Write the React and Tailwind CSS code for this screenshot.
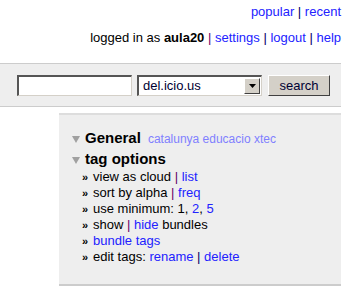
import React from "react";

const Sep = ({ purple }) => (
  <span className={purple ? "text-[#660066]" : "text-[#000066]"}> | </span>
);

const A = ({ children }) => <a className="text-[#2222ff] cursor-pointer">{children}</a>;

const Item = ({ children }) => (
  <li className="flex h-4 items-center">
    <span className="w-[11px] text-[11px] font-bold">»</span>
    <span>{children}</span>
  </li>
);

export default function App() {
  return (
    <div className="w-[349px] h-[293px] bg-white text-[13px] text-black font-['Liberation_Sans',Arial,sans-serif] overflow-hidden">
      {/* top links */}
      <div className="pr-2 pt-[4px] text-right leading-[16px]">
        <div>
          <A>popular</A>
          <Sep />
          <A>recent</A>
        </div>
        <div className="mt-[10px]">
          logged in as <b>aula20</b>
          <Sep purple />
          <A>settings</A>
          <Sep />
          <A>logout</A>
          <Sep />
          <A>help</A>
        </div>
      </div>

      {/* search band */}
      <div className="mt-[17px] mr-2 h-[44px] border-y border-[#cccccc] bg-[#eeeeee] flex items-center pl-[17px]">
        <div className="w-[115px] h-[21px] bg-white border-t-2 border-l-2 border-[#555] border-b border-r border-b-[#d4d0c8] border-r-[#d4d0c8]" />
        <div className="ml-[5px] w-[125px] h-[21px] bg-white border-t-2 border-l-2 border-[#555] border-b border-r border-b-[#d4d0c8] border-r-[#d4d0c8] flex items-center">
          <span className="flex-1 pl-[4px] text-[13px] text-[#000033]">del.icio.us</span>
          <div className="w-[16px] h-[16px] mr-[1px] bg-[#d4d0c8] border border-t-white border-l-white border-b-[#404040] border-r-[#404040] flex items-center justify-center">
            <svg width="7" height="4" viewBox="0 0 7 4"><path d="M0 0h7L3.5 4z" fill="#000" /></svg>
          </div>
        </div>
        <button className="ml-[6px] w-[62px] h-[21px] bg-[#d4d0c8] border border-t-white border-l-white border-b-[#404040] border-r-[#404040] text-[13px] text-[#000033] leading-none">
          search
        </button>
      </div>

      {/* tag panel */}
      <div className="mt-[6px] ml-[59px] mr-2 h-[173px] border-t-2 border-t-[#dddddd] border-b-2 border-b-[#cccccc] bg-[#eeeeee] pl-[13px] pt-[14px]">
        <div className="flex items-baseline leading-[18px]">
          <svg width="8" height="7" viewBox="0 0 8 7" className="mr-[5px] self-center mt-[2px]"><path d="M0 0h8L4 7z" fill="#a0a0a0" /></svg>
          <span className="text-[15px] font-bold">General</span>
          <span className="ml-[7px] text-[12px] text-[#8080ff]">catalunya educacio xtec</span>
        </div>
        <div className="flex items-baseline leading-[18px] mt-[2px]">
          <svg width="8" height="7" viewBox="0 0 8 7" className="mr-[5px] self-center mt-[2px]"><path d="M0 0h8L4 7z" fill="#a0a0a0" /></svg>
          <span className="text-[15px] font-bold">tag options</span>
        </div>
        <ul className="pl-[10px] mt-[1px] leading-[16px]">
          <Item>view as cloud<Sep purple /><A>list</A></Item>
          <Item>sort by alpha<Sep purple /><A>freq</A></Item>
          <Item>use minimum: 1, <A>2</A>, <A>5</A></Item>
          <Item>show<Sep purple /><A>hide</A> bundles</Item>
          <Item><A>bundle tags</A></Item>
          <Item>edit tags: <A>rename</A><Sep /><A>delete</A></Item>
        </ul>
      </div>
    </div>
  );
}
